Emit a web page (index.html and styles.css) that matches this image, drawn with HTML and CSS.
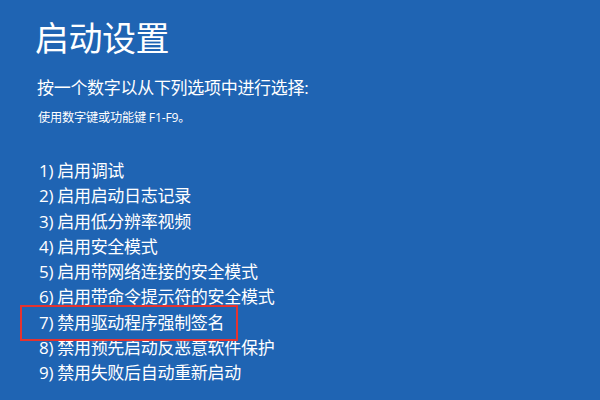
FILE: index.html
```html
<!DOCTYPE html>
<html lang="zh-CN">
<head>
<meta charset="utf-8">
<title>启动设置</title>
<link rel="stylesheet" href="styles.css">
</head>
<body>
<main class="screen">
  <h1 class="title">启动设置</h1>
  <p class="prompt">按一个数字以从下列选项中进行选择:</p>
  <p class="hint">使用数字键或功能键 F1-F9。</p>
  <ol class="options">
    <li class="option">1) 启用调试</li>
    <li class="option">2) 启用启动日志记录</li>
    <li class="option">3) 启用低分辨率视频</li>
    <li class="option">4) 启用安全模式</li>
    <li class="option">5) 启用带网络连接的安全模式</li>
    <li class="option">6) 启用带命令提示符的安全模式</li>
    <li class="option marked">7) 禁用驱动程序强制签名</li>
    <li class="option">8) 禁用预先启动反恶意软件保护</li>
    <li class="option">9) 禁用失败后自动重新启动</li>
  </ol>
</main>
</body>
</html>
```
FILE: styles.css
```css
html, body {
  margin: 0;
  padding: 0;
  background: #1f64b3;
}
body {
  width: 600px;
  height: 400px;
  overflow: hidden;
  color: #ffffff;
  font-family: "Segoe UI", "Open Sans", "Noto Sans CJK SC", sans-serif;
}
.screen {
  padding: 18px 0 0 35px;
}
.title {
  margin: 0;
  font-size: 34px;
  line-height: 40px;
  font-weight: normal;
  letter-spacing: -0.5px;
}
.prompt {
  margin: 18px 0 0 2px;
  font-size: 17px;
  line-height: 24px;
  letter-spacing: -0.3px;
}
.hint {
  margin: 10px 0 0 3px;
  font-size: 12.2px;
  line-height: 16px;
  letter-spacing: -0.2px;
}
.options {
  list-style: none;
  margin: 32px 0 0 4px;
  padding: 0;
}
.option {
  font-size: 17px;
  line-height: 25.25px;
  letter-spacing: -0.3px;
}
.marked {
  position: relative;
  width: fit-content;
}
.marked::after {
  content: "";
  position: absolute;
  left: -19px;
  right: -14px;
  top: -5px;
  bottom: -6px;
  border: 2px solid #e5332f;
}
```
